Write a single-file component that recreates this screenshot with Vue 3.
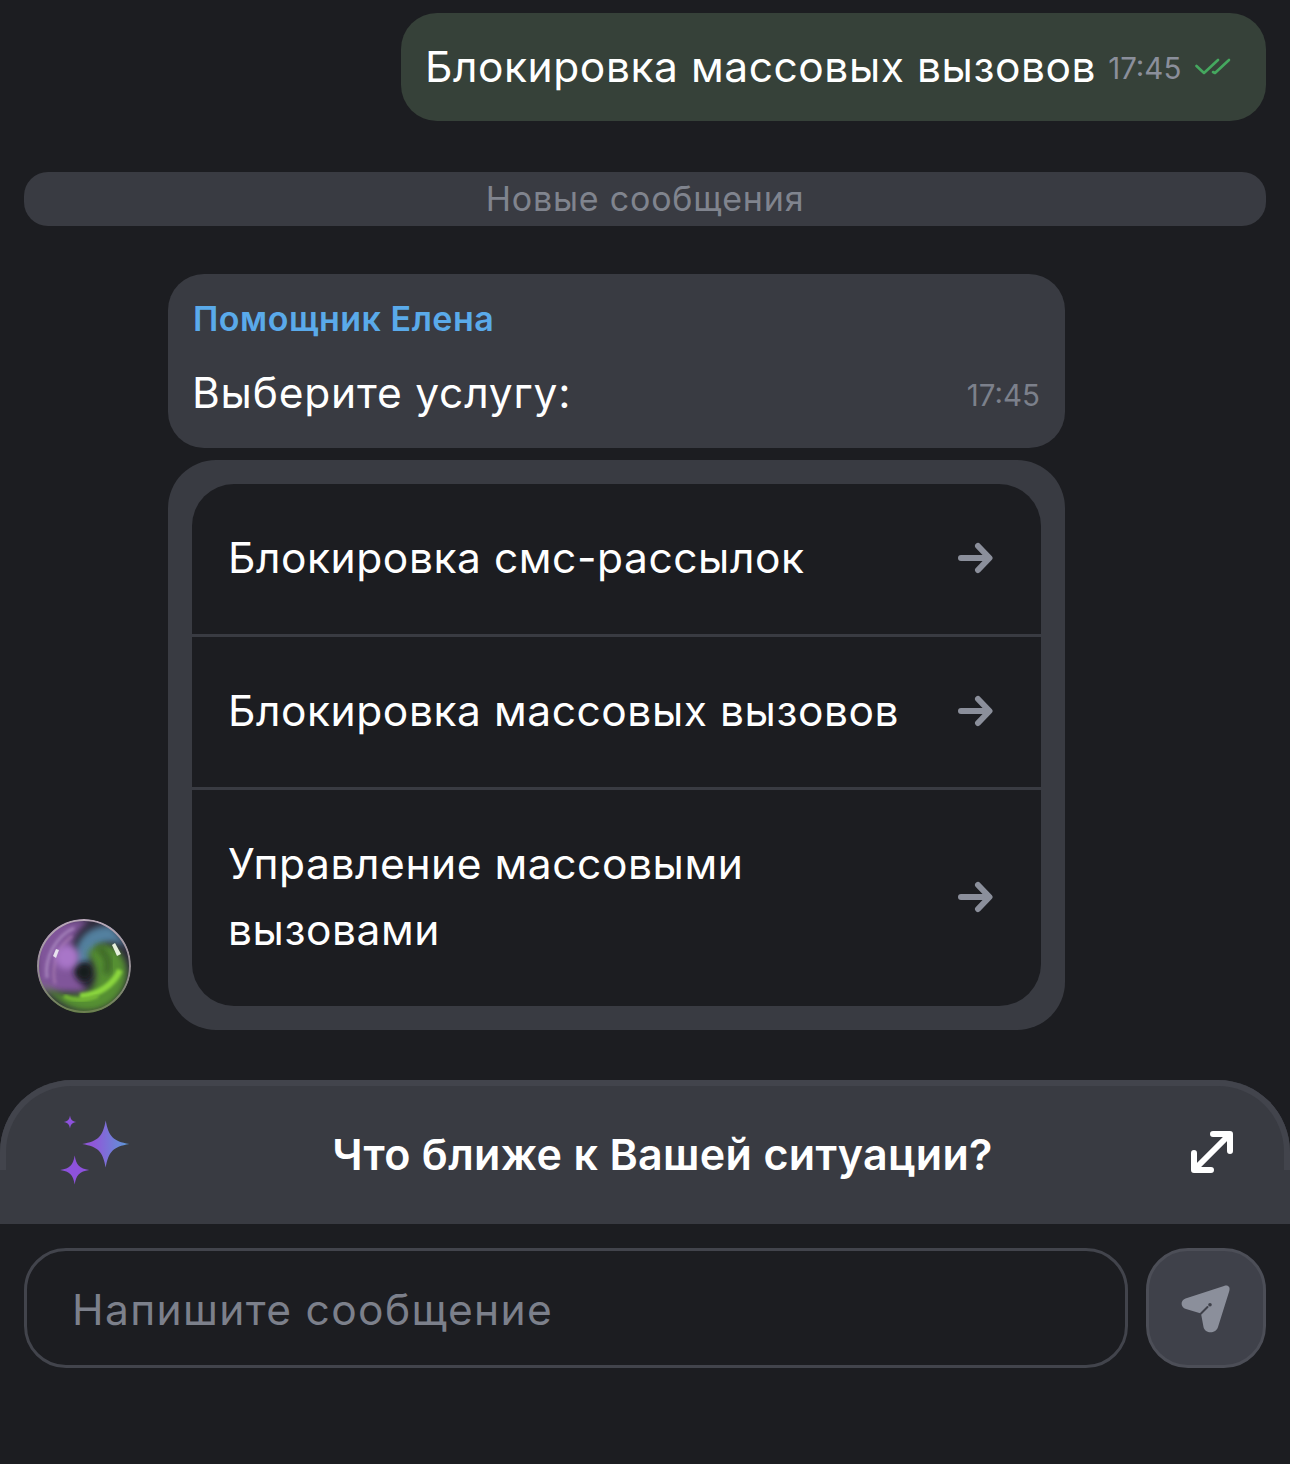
<template>
  <div class="chat">
    <div class="messages">
      <div class="outgoing">
        <span class="out-text">Блокировка массовых вызовов</span>
        <span class="out-time">17:45</span>
        <svg class="checks" width="36" height="20" viewBox="0 0 36 20" fill="none" stroke="#45a85f" stroke-width="2.6" stroke-linecap="round" stroke-linejoin="round">
          <path d="M1.500 10 L9 17 L23 4" />
          <path d="M18 16 L20 17 L34 4" />
        </svg>
      </div>

      <div class="new-divider">Новые сообщения</div>

      <div class="incoming">
        <div class="avatar">
          <svg width="96" height="96" viewBox="0 0 96 96">
            <defs>
              <clipPath id="ball"><circle cx="48" cy="48" r="47" /></clipPath>
              <filter id="blur5" x="-50%" y="-50%" width="200%" height="200%"><feGaussianBlur stdDeviation="5" /></filter>
              <filter id="blur3" x="-50%" y="-50%" width="200%" height="200%"><feGaussianBlur stdDeviation="3" /></filter>
              <filter id="blur1" x="-50%" y="-50%" width="200%" height="200%"><feGaussianBlur stdDeviation="1.500" /></filter>
              <linearGradient id="rim" x1="0" y1="0" x2="0" y2="1">
                <stop offset="0" stop-color="#b9a9b8" />
                <stop offset="0.6" stop-color="#8f8a8c" />
                <stop offset="1" stop-color="#6c7f50" />
              </linearGradient>
            </defs>
            <g clip-path="url(#ball)">
              <circle cx="48" cy="48" r="47" fill="#2d2a3a" />
              <path d="M0 74 L0 20 C10 6 30 0 54 2 C40 12 34 24 36 38 C38 52 44 64 52 74 Z" fill="#80549a" filter="url(#blur3)" />
              <path d="M11 60 C8 40 20 18 38 10" fill="none" stroke="#a583bb" stroke-width="3" filter="url(#blur1)" />
              <path d="M19 66 C15 48 22 28 36 18" fill="none" stroke="#9a6ea8" stroke-width="3" filter="url(#blur1)" />
              <path d="M40 46 C36 26 50 6 76 8 L92 30 C72 18 58 26 52 46 Z" fill="#52809f" filter="url(#blur3)" />
              <circle cx="48" cy="54" r="9" fill="#181a1e" filter="url(#blur3)" />
              <circle cx="31" cy="39" r="12" fill="#a876c8" filter="url(#blur3)" />
              <path d="M52 36 C60 22 78 24 86 38 C96 54 90 74 74 86 C56 100 26 94 4 64 C22 80 42 80 54 72 C62 64 62 50 52 36 Z" fill="#548f33" filter="url(#blur3)" />
              <path d="M62 30 C72 36 74 46 70 56" fill="none" stroke="#3a6428" stroke-width="7" filter="url(#blur3)" />
              <path d="M44 78 C62 78 78 66 84 52" fill="none" stroke="#8ad63c" stroke-width="6" filter="url(#blur1)" />
              <path d="M28 78 C40 84 52 82 62 78" fill="none" stroke="#74b835" stroke-width="4" filter="url(#blur1)" />
              <path d="M10 80 C32 97 66 97 88 76 L86 100 L10 100 Z" fill="#4a6b32" filter="url(#blur1)" />
              <circle cx="48" cy="48" r="46" fill="none" stroke="url(#rim)" stroke-width="2" />
            </g>
            <path d="M17 38 L20 31 L23 32 L20 40 Z" fill="#e8e4ee" />
            <path d="M79 25 L85 36 L81 38 L76 27 Z" fill="#e6f0dc" />
          </svg>
        </div>

        <div class="thread">
          <div class="bubble">
            <div class="sender">Помощник Елена</div>
            <div class="bubble-row">
              <span class="bubble-text">Выберите услугу:</span>
              <span class="bubble-time">17:45</span>
            </div>
          </div>

          <div class="options-card">
            <div class="options">
              <div v-for="opt in options" :key="opt" class="option">
                <span class="option-text">{{ opt }}</span>
                <svg class="arrow" width="36" height="36" viewBox="0 0 36 36" fill="none" stroke="#8b8f9b" stroke-width="6" stroke-linecap="round" stroke-linejoin="round">
                  <path d="M4 18 H31" />
                  <path d="M21 6 L32.500 18 L21 30" />
                </svg>
              </div>
            </div>
          </div>
        </div>
      </div>
    </div>

    <div class="hint-panel">
      <svg class="sparkles" width="76" height="76" viewBox="0 0 76 76">
        <defs>
          <linearGradient id="spark" x1="0" y1="0" x2="1" y2="0">
            <stop offset="0.25" stop-color="#8f58d8" />
            <stop offset="1" stop-color="#5b9ad8" />
          </linearGradient>
        </defs>
        <path :d="star(49.7, 30, 23.5)" fill="url(#spark)" />
        <path :d="star(18.7, 56, 14.5)" fill="#8d52dc" />
        <path :d="star(14, 8, 6.5)" fill="#8d52dc" />
      </svg>
      <span class="hint-text">Что ближе к Вашей ситуации?</span>
      <svg class="expand" width="44" height="44" viewBox="0 0 44 44" fill="none" stroke="#fff" stroke-width="6" stroke-linecap="round" stroke-linejoin="round">
        <path d="M5 39 L39 5" />
        <path d="M23 4 H40 V21" />
        <path d="M4 23 V40 H21" />
      </svg>
    </div>

    <div class="composer">
      <div class="input">Напишите сообщение</div>
      <button class="send">
        <svg width="52" height="54" viewBox="0 0 52 54">
          <path d="M44 5 C48 3.500 50.500 6 49.300 10 L38 46 C36 53 25 53 23.500 46 L21 32.500 L6 28 C0.500 26.500 0 19.500 5.500 17.500 Z" fill="#8b8f9b" />
          <path d="M21 32.500 L27.500 26" stroke="#3f414a" stroke-width="2" stroke-linecap="round" />
          <circle cx="30" cy="23.700" r="1.800" fill="#3f414a" />
        </svg>
      </button>
    </div>
  </div>
</template>

<script setup>
const options = [
  'Блокировка смс-рассылок',
  'Блокировка массовых вызовов',
  'Управление массовыми вызовами'
]

// four-pointed star with concave sides
function star(cx, cy, r) {
  const a = r * 0.12
  const b = r * 0.32
  return `M${cx} ${cy - r}
    C${cx + a} ${cy - b} ${cx + b} ${cy - a} ${cx + r} ${cy}
    C${cx + b} ${cy + a} ${cx + a} ${cy + b} ${cx} ${cy + r}
    C${cx - a} ${cy + b} ${cx - b} ${cy + a} ${cx - r} ${cy}
    C${cx - b} ${cy - a} ${cx - a} ${cy - b} ${cx} ${cy - r} Z`
}
</script>

<style>
html, body {
  background: #1c1d21;
}
</style>

<style scoped>
.chat {
  width: 1290px;
  height: 1464px;
  background: #1c1d21;
  color: #fff;
  font-family: Inter, "Noto Sans", sans-serif;
  box-sizing: border-box;
  padding-top: 13px;
  overflow: hidden;
}

.messages {
  padding: 0 24px;
}

.outgoing {
  width: 865px;
  height: 108px;
  margin-left: auto;
  box-sizing: border-box;
  padding-left: 24px;
  display: flex;
  align-items: center;
  background: #364139;
  border-radius: 36px;
}

.out-text {
  margin-top: -2px;
  font-size: 42.500px;
  letter-spacing: 0.55px;
}

.out-time {
  margin-left: 12px;
  margin-top: 2px;
  font-size: 29.500px;
  color: #8b8f9b;
}

.checks {
  margin-left: 14px;
  margin-top: -2px;
}

.new-divider {
  margin-top: 51px;
  height: 54px;
  line-height: 53px;
  text-align: center;
  font-size: 34px;
  letter-spacing: 0.8px;
  color: #80848e;
  background: #393b42;
  border-radius: 24px;
}

.incoming {
  margin-top: 48px;
  display: flex;
  align-items: flex-end;
}

.avatar {
  width: 96px;
  height: 96px;
  margin-left: 12px;
  margin-right: 36px;
  margin-bottom: 16px;
}

.thread {
  width: 897px;
  display: flex;
  flex-direction: column;
  gap: 12px;
}

.bubble {
  height: 174px;
  box-sizing: border-box;
  padding: 24px 25px 0 24px;
  background: #393b42;
  border-radius: 36px;
}

.sender {
  margin-left: 1px;
  font-size: 34px;
  font-weight: 600;
  letter-spacing: 0.5px;
  line-height: 41px;
  color: #5aaaea;
}

.bubble-row {
  margin-top: 28px;
  display: flex;
  align-items: center;
  justify-content: space-between;
}

.bubble-text {
  font-size: 42.500px;
  letter-spacing: 0.8px;
}

.bubble-time {
  margin-top: 5px;
  font-size: 29.500px;
  color: #7c808b;
}

.options-card {
  padding: 24px;
  background: #393b42;
  border-radius: 48px;
}

.options {
  background: #1c1d21;
  border-radius: 42px;
  overflow: hidden;
}

.option {
  display: flex;
  align-items: center;
  justify-content: space-between;
  box-sizing: border-box;
  padding: 41px 48px 43px 36px;
  border-bottom: 3px solid #393b42;
}

.option:last-child {
  border-bottom: 0;
}

.option-text {
  width: 690px;
  font-size: 42.500px;
  letter-spacing: 0.55px;
  line-height: 66px;
}

.arrow {
  flex: none;
}

.hint-panel {
  position: relative;
  margin-top: 50px;
  height: 144px;
  box-sizing: border-box;
  display: flex;
  align-items: center;
  justify-content: center;
  background: #393b42;
  border-radius: 72px 72px 0 0;
}

.hint-panel::before {
  content: "";
  position: absolute;
  left: 0;
  right: 0;
  top: 0;
  height: 90px;
  box-sizing: border-box;
  border: 6px solid #42444c;
  border-bottom: 0;
  border-radius: 72px 72px 0 0;
}

.sparkles {
  position: absolute;
  left: 56px;
  top: 34px;
}

.hint-text {
  position: relative;
  margin-left: 35px;
  margin-top: 4px;
  font-size: 43px;
  font-weight: 600;
  letter-spacing: 0.33px;
}

.expand {
  position: absolute;
  left: 1190px;
  top: 50px;
}

.composer {
  display: flex;
  gap: 18px;
  padding: 24px 24px 0;
}

.input {
  flex: 1;
  height: 120px;
  box-sizing: border-box;
  padding-left: 45px;
  line-height: 118px;
  border: 3px solid #42444c;
  border-radius: 42px;
  font-size: 42.500px;
  letter-spacing: 1.35px;
  color: #7c808b;
}

.send {
  width: 120px;
  height: 120px;
  padding: 0;
  display: flex;
  align-items: center;
  justify-content: center;
  background: #3f414a;
  border: 3px solid #4c4e57;
  border-radius: 42px;
}
</style>
